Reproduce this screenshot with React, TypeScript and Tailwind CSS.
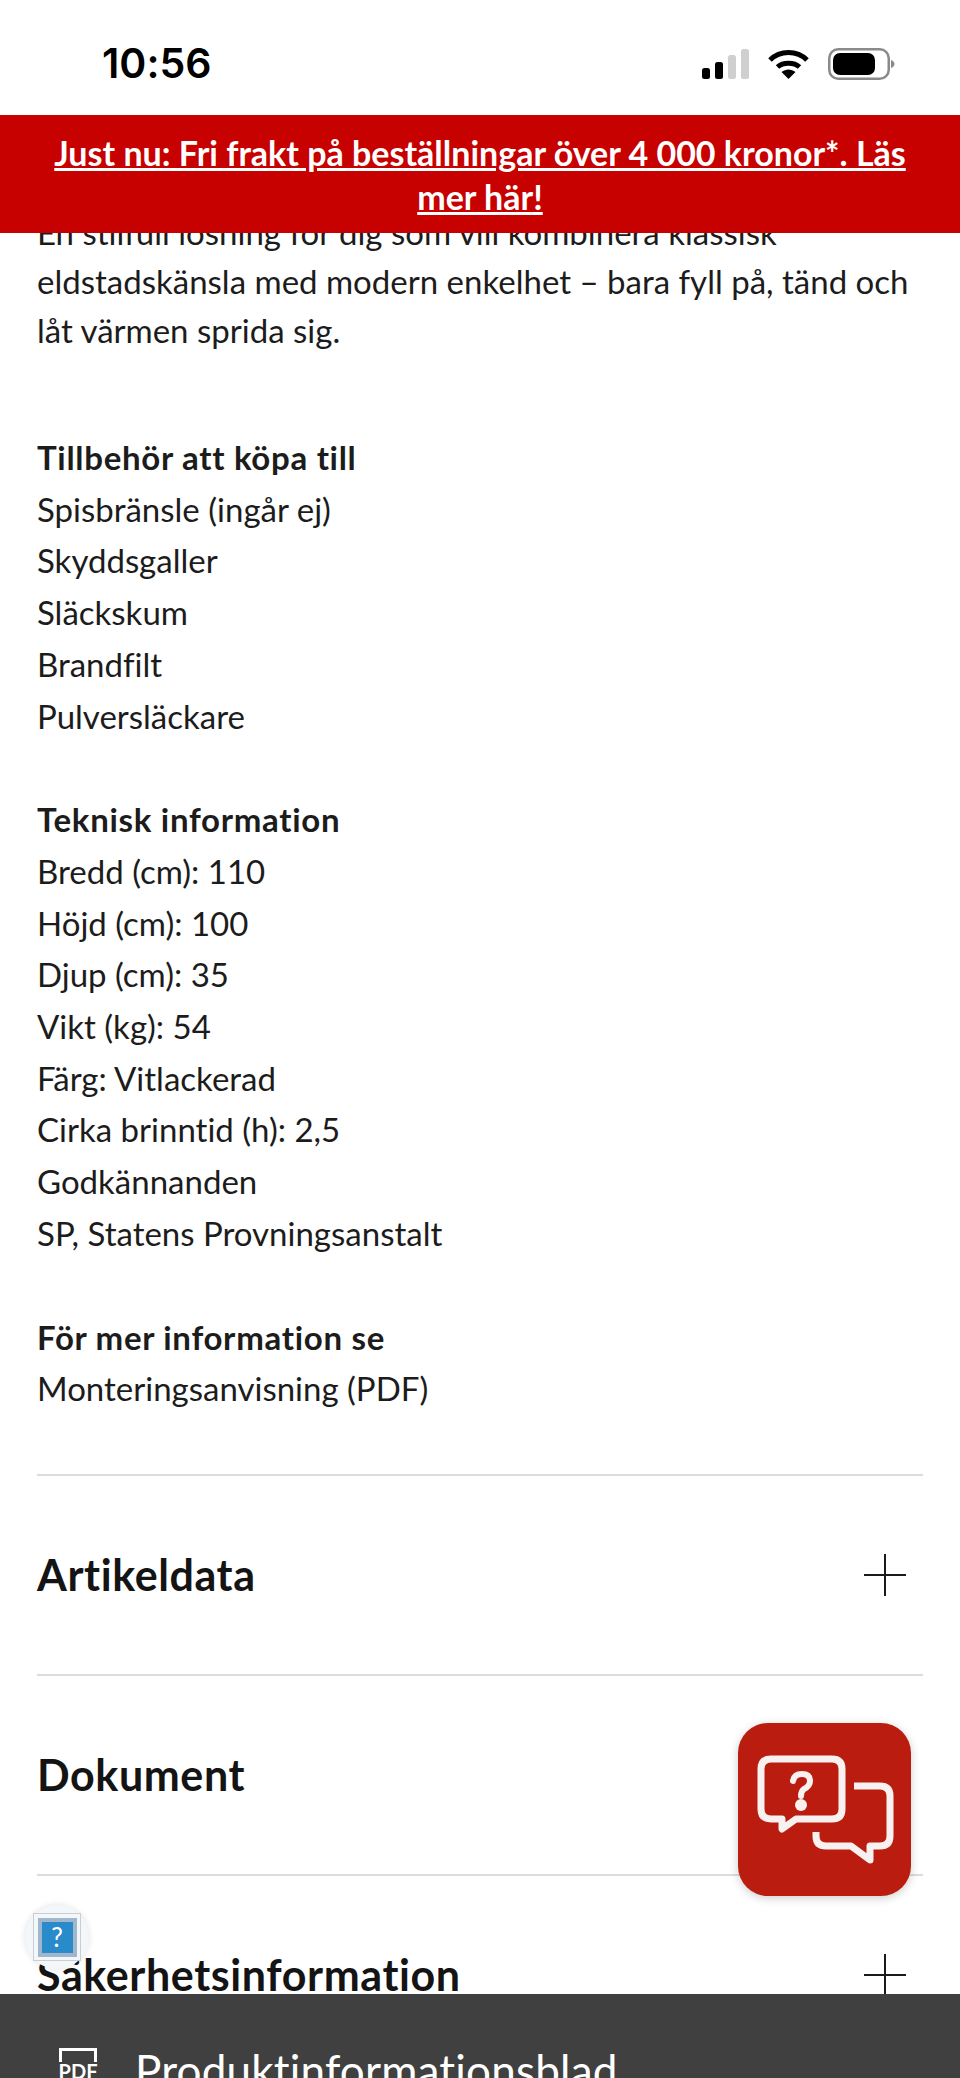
const tillbehor = ["Spisbränsle (ingår ej)", "Skyddsgaller", "Släckskum", "Brandfilt", "Pulversläckare"];
const teknisk = [
  "Bredd (cm): 110",
  "Höjd (cm): 100",
  "Djup (cm): 35",
  "Vikt (kg): 54",
  "Färg: Vitlackerad",
  "Cirka brinntid (h): 2,5",
  "Godkännanden",
  "SP, Statens Provningsanstalt",
];

const StatusIcons = () => (
  <div className="ml-auto flex items-center gap-[19px] pr-[65px]">
    <svg width="47" height="30" viewBox="0 0 47 30">
      <rect x="0" y="19" width="8" height="11" rx="2.5" fill="#000" />
      <rect x="13" y="13" width="8" height="17" rx="2.5" fill="#000" />
      <rect x="26" y="6" width="8" height="24" rx="2.5" fill="#cfcfcf" />
      <rect x="39" y="0" width="8" height="30" rx="2.5" fill="#cfcfcf" />
    </svg>
    <svg width="41" height="30" viewBox="0 0 41 30" fill="none">
      <path d="M2 11 C12 1 29 1 39 11" stroke="#000" strokeWidth="5" />
      <path d="M9.5 18 C15 13 26 13 31.500 18" stroke="#000" strokeWidth="5" />
      <path d="M13.500 23 L20.500 30 L27.500 23 C23 19.500 18 19.500 13.500 23 Z" fill="#000" />
    </svg>
    <svg width="67" height="32" viewBox="0 0 67 32">
      <rect x="1.250" y="1.250" width="59.500" height="29.500" rx="9" fill="none" stroke="#8a8a8a" strokeWidth="2.500" />
      <rect x="5" y="5" width="42" height="22" rx="7" fill="#000" />
      <path d="M63 12 C65.500 13 66.500 14.500 66.500 16 C66.500 17.500 65.500 19 63 20 Z" fill="#8a8a8a" />
    </svg>
  </div>
);

const ChatIcon = () => (
  <svg width="173" height="173" viewBox="0 0 173 173" fill="none">
    <path
      d="M33 36 H94 Q104 36 104 46 V86 Q104 96 94 96 H58 L44 106 V96 H33 Q23 96 23 86 V46 Q23 36 33 36 Z"
      stroke="#f7f1ef"
      strokeWidth="7"
      strokeLinejoin="round"
    />
    <path
      d="M116 63 H142 Q152 63 152 73 V113 Q152 123 142 123 H132 V137 L113 123 H88 Q78 123 78 113 V109"
      stroke="#f7f1ef"
      strokeWidth="7"
      strokeLinejoin="round"
      strokeLinecap="butt"
    />
    <path d="M55 58 Q56 51 64 51 Q72 51 72 58 Q72 63 66 66 Q63 68 63 73" stroke="#f7f1ef" strokeWidth="6" strokeLinecap="round" />
    <circle cx="63" cy="82" r="6" fill="#f7f1ef" />
  </svg>
);

const Plus = () => (
  <svg width="42" height="42" viewBox="0 0 42 42" className="mr-[17px]">
    <path d="M21 0 V42 M0 21 H42" stroke="#1a1a1a" strokeWidth="2" />
  </svg>
);

const Section = ({ title }: { title: string }) => (
  <div className="flex h-[200px] items-center justify-between border-t-2 border-[#dcdcdc]">
    <h2 className="text-[43px] font-bold tracking-[0.6px] text-[#141414]">{title}</h2>
    <Plus />
  </div>
);

export default function App() {
  return (
    <div
      className="relative h-[2078px] w-[960px] overflow-hidden bg-white text-[#1c1c1c] [font-variant-ligatures:none]"
      style={{ fontFamily: '"Lato", "Noto Sans", sans-serif' }}
    >
      <header className="relative z-10">
        <div className="flex h-[115px] items-center bg-white pt-[12px]">
          <span className="pl-[102px] text-[41px] font-semibold text-black" style={{ fontFamily: '"Inter", sans-serif' }}>
            10:56
          </span>
          <StatusIcons />
        </div>
        <div className="flex h-[118px] items-center justify-center bg-[#c70000] px-[48px] pt-[2px] text-center">
          <a className="text-[34px] leading-[44px] font-bold text-white underline">
            Just nu: Fri frakt på beställningar över 4 000 kronor*. Läs mer här!
          </a>
        </div>
      </header>

      <main className="-mt-[25px] px-[37px]">
        <p className="text-[33px] leading-[49px]">
          En stilfull lösning för dig som vill kombinera klassisk eldstadskänsla med modern enkelhet – bara fyll på,
          tänd och låt värmen sprida sig.
        </p>

        <div className="mt-[77px] text-[33px] leading-[51.7px]">
          <p className="font-bold tracking-[0.7px]">Tillbehör att köpa till</p>
          {tillbehor.map((t) => (
            <p key={t}>{t}</p>
          ))}
          <p className="mt-[52px] font-bold tracking-[0.7px]">Teknisk information</p>
          {teknisk.map((t) => (
            <p key={t}>{t}</p>
          ))}
          <p className="mt-[52px] font-bold tracking-[0.7px]">För mer information se</p>
          <p>Monteringsanvisning (PDF)</p>
        </div>

        <div className="mt-[59px]">
          <Section title="Artikeldata" />
          <Section title="Dokument" />
          <Section title="Säkerhetsinformation" />
        </div>
      </main>

      {/* floating chat button */}
      <button className="absolute top-[1723px] left-[738px] z-20 h-[173px] w-[173px] rounded-[30px] bg-[#bb1c10] shadow-[0_2px_10px_rgba(0,0,0,0.2)]">
        <ChatIcon />
      </button>

      {/* broken image placeholder */}
      <div className="absolute top-[1905px] left-[25px] z-20 flex h-[64px] w-[64px] items-center justify-center rounded-full bg-[#f3f7fa] shadow-[0_0_6px_rgba(0,0,0,0.12)]">
        <div className="flex h-[48px] w-[48px] items-center justify-center border border-[#c9ced2]">
          <div className="flex h-[39px] w-[39px] items-center justify-center border-[4px] border-[#9fb6cc] bg-[#2a8bcb] text-[26px] leading-none text-white">
            ?
          </div>
        </div>
      </div>

      <div className="absolute top-[1994px] left-0 z-10 flex h-[120px] w-full items-start bg-[#404040] pt-[54px] pl-[59px] text-white">
        <div className="flex w-[38px] flex-col items-center">
          <div className="h-[14px] w-[38px] border-x-[3px] border-t-[3px] border-white" />
          <span className="-mt-[1px] text-[20px] leading-none font-bold">PDF</span>
        </div>
        <span className="-mt-[6px] ml-[38px] text-[44px] leading-[56px] tracking-[0.2px]">Produktinformationsblad</span>
      </div>
    </div>
  );
}
